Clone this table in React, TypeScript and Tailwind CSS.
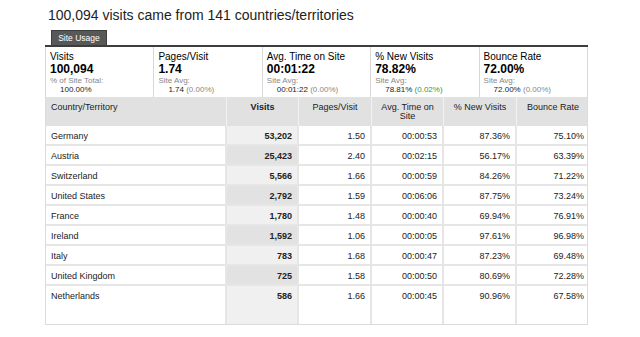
import React from 'react'

type Summary = { label: string; value: string; sub: string; avg: string; delta?: string; green?: boolean }

const summary: Summary[] = [
  { label: 'Visits', value: '100,094', sub: '% of Site Total:', avg: '100.00%' },
  { label: 'Pages/Visit', value: '1.74', sub: 'Site Avg:', avg: '1.74', delta: '(0.00%)' },
  { label: 'Avg. Time on Site', value: '00:01:22', sub: 'Site Avg:', avg: '00:01:22', delta: '(0.00%)' },
  { label: '% New Visits', value: '78.82%', sub: 'Site Avg:', avg: '78.81%', delta: '(0.02%)', green: true },
  { label: 'Bounce Rate', value: '72.00%', sub: 'Site Avg:', avg: '72.00%', delta: '(0.00%)' },
]

const rows = [
  ['Germany', '53,202', '1.50', '00:00:53', '87.36%', '75.10%'],
  ['Austria', '25,423', '2.40', '00:02:15', '56.17%', '63.39%'],
  ['Switzerland', '5,566', '1.66', '00:00:59', '84.26%', '71.22%'],
  ['United States', '2,792', '1.59', '00:06:06', '87.75%', '73.24%'],
  ['France', '1,780', '1.48', '00:00:40', '69.94%', '76.91%'],
  ['Ireland', '1,592', '1.06', '00:00:05', '97.61%', '96.98%'],
  ['Italy', '783', '1.68', '00:00:47', '87.23%', '69.48%'],
  ['United Kingdom', '725', '1.58', '00:00:50', '80.69%', '72.28%'],
  ['Netherlands', '586', '1.66', '00:00:45', '90.96%', '67.58%'],
]

const cols = 'grid grid-cols-[181px_72px_73px_72px_73px_72px]'

export default function App() {
  return (
    <div className="w-[640px] h-[337px] bg-white text-[#222] font-['Liberation_Sans',Arial,sans-serif] pl-[45px] pt-[7px]">
      <h1 className="text-[14px] leading-[16px] pl-[3px]">100,094 visits came from 141 countries/territories</h1>

      {/* tab */}
      <div className="mt-[7px] ml-[6px] w-[56px] h-[15px] bg-[#585858] border border-b-0 border-[#3e3e3e] text-white text-[8.5px] leading-[14px] text-center">
        Site Usage
      </div>
      <div className="w-[543px] h-[2px] bg-[#3d3d3d]" />

      {/* summary */}
      <div className="w-[543px] h-[50px] grid grid-cols-5 border-l border-[#d8d8d8]">
        {summary.map((s) => (
          <div key={s.label} className="border-r border-[#d8d8d8] pl-[4px] pt-[4px]">
            <div className="text-[10px] leading-[12px] text-black">{s.label}</div>
            <div className="text-[12px] leading-[13px] font-bold text-black">{s.value}</div>
            <div className="text-[8px] leading-[9px] text-[#888]">{s.sub}</div>
            <div className="text-[8px] leading-[9px] pl-[10px] text-[#222]">
              {s.avg}
              {s.delta && (
                <span className={s.green ? ' text-[#3a9a3a]' : ' text-[#888]'}> {s.delta}</span>
              )}
            </div>
          </div>
        ))}
      </div>

      {/* table */}
      <div className="w-[543px] border-l border-r border-b border-[#dcdcdc]">
        <div className={`${cols} h-[29px] bg-[#e1e1e1] text-[9px] leading-[9px]`}>
          <div className="pl-[5px] pt-[6px] border-r border-[#f2f2f2]">Country/Territory</div>
          <div className="pt-[6px] text-center font-bold border-r border-[#f2f2f2]">Visits</div>
          <div className="pt-[6px] text-center border-r border-[#f2f2f2]">Pages/Visit</div>
          <div className="pt-[6px] text-center border-r border-[#f2f2f2]">
            Avg. Time on
            <br />
            Site
          </div>
          <div className="pt-[6px] text-center border-r border-[#f2f2f2]">% New Visits</div>
          <div className="pt-[6px] text-center">Bounce Rate</div>
        </div>

        {rows.map((r, i) => (
          <div
            key={r[0]}
            className={`${cols} text-[9px] leading-[10px] ${i === rows.length - 1 ? 'h-[38px]' : 'h-[20px] border-b-2 border-[#e6e6e6]'}`}
          >
            <div className="pl-[5px] pt-[5px] border-r-2 border-[#e6e6e6]">{r[0]}</div>
            <div
              className={`pr-[5px] pt-[5px] text-right font-bold border-r-2 border-[#e6e6e6] ${i % 2 === 0 ? 'bg-[#f0f0f0]' : 'bg-[#e2e2e2]'}`}
            >
              {r[1]}
            </div>
            <div className="pr-[5px] pt-[5px] text-right border-r-2 border-[#e6e6e6]">{r[2]}</div>
            <div className="pr-[5px] pt-[5px] text-right border-r-2 border-[#e6e6e6]">{r[3]}</div>
            <div className="pr-[5px] pt-[5px] text-right border-r-2 border-[#e6e6e6]">{r[4]}</div>
            <div className="pr-[5px] pt-[5px] text-right">{r[5]}</div>
          </div>
        ))}
      </div>
    </div>
  )
}
